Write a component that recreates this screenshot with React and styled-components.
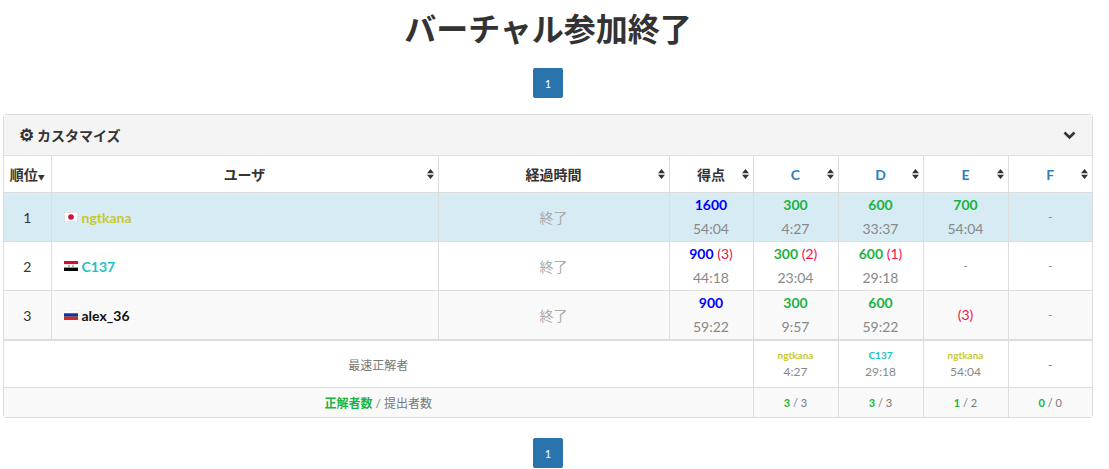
import React from "react";
import styled, { createGlobalStyle } from "styled-components";

const Global = createGlobalStyle`
  body { margin: 0; font-family: Lato, "Noto Sans CJK JP", sans-serif; color: #333; background: #fff; }
`;
const Page = styled.div`display:flex;flex-direction:column;align-items:center;padding:0 16px 0 3px;`;
const Title = styled.h1`margin:8px 0 0;font-size:32px;font-weight:700;height:42px;line-height:42px;color:#333;`;
const PageBtn = styled.div`width:30px;height:30px;background:#2a74ad;color:#fff;font-size:11px;display:flex;align-items:center;justify-content:center;border-radius:2px;margin:${p=>p.$m};`;
const Panel = styled.div`align-self:stretch;border:1px solid #ddd;border-radius:3px;`;
const PanelHead = styled.div`height:40px;background:#f4f4f4;border-bottom:1px solid #ddd;display:flex;align-items:center;justify-content:space-between;padding:0 16px 0 15px;font-weight:700;font-size:14px;`;
const Gear = styled.span`font-size:17px;line-height:1;margin-right:3px;`;
const Table = styled.table`border-collapse:collapse;width:100%;table-layout:fixed;font-size:14px;`;
const Th = styled.th`border:1px solid #ddd;border-top:none;height:36px;position:relative;font-size:14px;font-weight:700;color:${p=>p.$c||"#333"};padding:0;
  &:first-child{border-left:none;} &:last-child{border-right:none;}`;
const Sort = styled.svg`position:absolute;right:4px;top:50%;transform:translateY(-50%);width:7px;height:10px;`;
const Tr = styled.tr`background:${p=>p.$bg};`;
const Td = styled.td`border:1px solid #ddd;height:48px;text-align:${p=>p.$left?"left":"center"};padding:${p=>p.$left?"0 12px":"0"};vertical-align:middle;color:${p=>p.$c||"#333"};
  &:first-child{border-left:none;} &:last-child{border-right:none;}`;
const FTd = styled(Td)`height:${p=>p.$h}px;font-size:12px;color:#777;${p=>p.$top?"border-top:2px solid #ddd;":""}`;
const Score = styled.div`font-weight:700;color:${p=>p.$c};line-height:24px;font-size:14px;`;
const Pen = styled.span`color:#f0134d;font-weight:400;`;
const Time = styled.div`color:#888;line-height:24px;font-size:14px;`;
const Name = styled.span`font-weight:700;color:${p=>p.$c};display:inline-flex;align-items:center;gap:4px;`;
const Flag = styled.svg`width:14px;height:10px;`;
const Small = styled.div`font-size:10px;font-weight:700;color:${p=>p.$c};line-height:16px;`;
const STime = styled.div`font-size:12px;color:#888;line-height:18px;`;

const Arrows = () => <Sort viewBox="0 0 7 10"><path d="M0 4.2 3.5 0 7 4.2ZM0 5.8 3.5 10 7 5.8Z" fill="#333"/></Sort>;
const flags = {
  jp: <Flag viewBox="0 0 14 10"><rect width="14" height="10" fill="#fff" stroke="#ccc"/><circle cx="7" cy="5" r="2.8" fill="#d0103a"/></Flag>,
  sy: <Flag viewBox="0 0 14 10"><rect width="14" height="3.4" fill="#ce1126"/><rect y="3.3" width="14" height="3.4" fill="#fff"/><rect y="6.6" width="14" height="3.4" fill="#000"/><circle cx="5" cy="5" r=".8" fill="#007a3d"/><circle cx="9" cy="5" r=".8" fill="#007a3d"/></Flag>,
  ru: <Flag viewBox="0 0 14 10"><rect width="14" height="3.4" fill="#fff" stroke="#ddd" strokeWidth=".5"/><rect y="3.3" width="14" height="3.4" fill="#0039a6"/><rect y="6.6" width="14" height="3.4" fill="#d52b1e"/></Flag>,
};
const G="#1bb340", B="#0000ff", Y="#c8c832", T="#17c3c8";
const Cell = ({s,c,p,t}) => s||p ? <><Score $c={c}>{s}{p&&<Pen>{s?" ":""}({p})</Pen>}</Score>{t&&<Time>{t}</Time>}</> : <Time style={{fontSize:12}}>-</Time>;
const rows = [
  {r:1,f:"jp",n:"ngtkana",nc:Y,bg:"#d6ebf4",sc:["1600",null,"54:04"],p:[["300",null,"4:27"],["600",null,"33:37"],["700",null,"54:04"],null]},
  {r:2,f:"sy",n:"C137",nc:T,bg:"#fff",sc:["900","3","44:18"],p:[["300","2","23:04"],["600","1","29:18"],null,null]},
  {r:3,f:"ru",n:"alex_36",nc:"#111",bg:"#f9f9f9",sc:["900",null,"59:22"],p:[["300",null,"9:57"],["600",null,"59:22"],[null,"3",null],null]},
];
const Pen2 = ({v}) => v && v[1] && !v[0] ? <Score as="div" $c="#f0134d" style={{fontWeight:400}}>({v[1]})</Score> : null;

export default function App(){
  return <><Global/><Page>
    <Title>バーチャル参加終了</Title>
    <PageBtn $m="18px 0 16px">1</PageBtn>
    <Panel>
      <PanelHead><span><Gear>⚙</Gear>カスタマイズ</span><svg width="13" height="10" viewBox="0 0 13 10"><path d="M1.5 2.5 6.5 7.5 11.5 2.5" stroke="#333" strokeWidth="2.6" fill="none"/></svg></PanelHead>
      <Table>
        <colgroup><col style={{width:47}}/><col style={{width:387}}/><col style={{width:231}}/><col style={{width:84}}/><col style={{width:85}}/><col style={{width:85}}/><col style={{width:85}}/><col/></colgroup>
        <thead><tr>
          <Th>順位<span style={{fontSize:7}}>▼</span></Th>
          <Th>ユーザ<Arrows/></Th><Th>経過時間<Arrows/></Th><Th>得点<Arrows/></Th>
          {["C","D","E","F"].map(x=><Th key={x} $c="#2a7fc0">{x}<Arrows/></Th>)}
        </tr></thead>
        <tbody>
          {rows.map(r=><Tr key={r.r} $bg={r.bg}>
            <Td>{r.r}</Td>
            <Td $left><Name $c={r.nc}>{flags[r.f]}{r.n}</Name></Td>
            <Td $c="#aaa">終了</Td>
            <Td><Cell s={r.sc[0]} c={B} p={r.sc[1]} t={r.sc[2]}/></Td>
            {r.p.map((v,i)=><Td key={i}>{v ? (v[0] ? <Cell s={v[0]} c={G} p={v[1]} t={v[2]}/> : <Pen2 v={v}/>) : <Time style={{fontSize:12}}>-</Time>}</Td>)}
          </Tr>)}
          <tr>
            <FTd $top $h={46} colSpan={4}>最速正解者</FTd>
            <FTd $top $h={46}><Small $c={Y}>ngtkana</Small><STime>4:27</STime></FTd>
            <FTd $top $h={46}><Small $c={T}>C137</Small><STime>29:18</STime></FTd>
            <FTd $top $h={46}><Small $c={Y}>ngtkana</Small><STime>54:04</STime></FTd>
            <FTd $top $h={46}>-</FTd>
          </tr>
          <tr style={{background:"#f9f9f9"}}>
            <FTd $h={29} colSpan={4} style={{borderBottom:"none"}}><b style={{color:G}}>正解者数</b> / 提出者数</FTd>
            {[["3","3"],["3","3"],["1","2"],["0","0"]].map((v,i)=><FTd key={i} $h={29} style={{borderBottom:"none",fontSize:11}}><b style={{color:G}}>{v[0]}</b> / {v[1]}</FTd>)}
          </tr>
        </tbody>
      </Table>
    </Panel>
    <PageBtn $m="20px 0 0">1</PageBtn>
  </Page></>;
}
